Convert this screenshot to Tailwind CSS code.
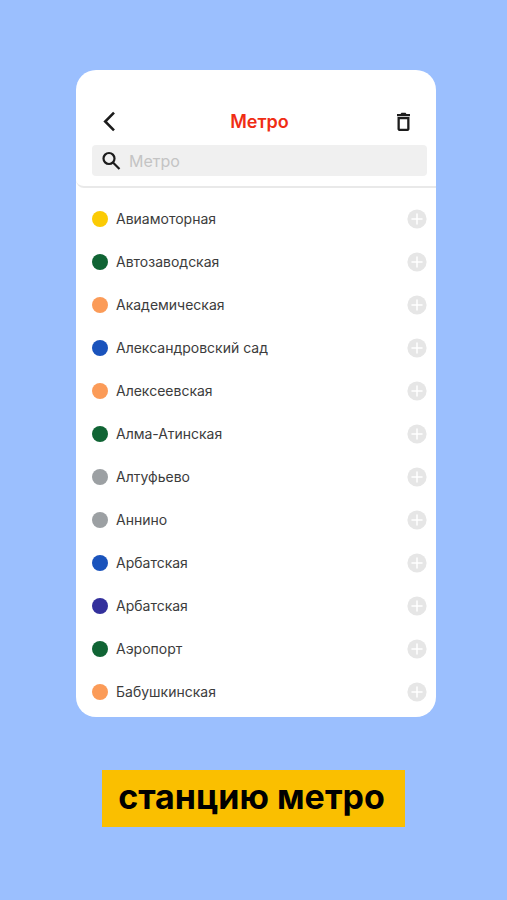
<!DOCTYPE html>
<html lang="ru">
  <head>
    <meta charset="UTF-8" />
    <meta name="viewport" content="width=device-width, initial-scale=1.0">
    <title>Метро</title>
    <script src="https://cdn.jsdelivr.net/npm/@tailwindcss/browser@4"></script>
  </head>
  <body class="bg-[#9bbffe] min-h-screen font-[Inter,Roboto,sans-serif]">
    <!-- icons -->
    <svg class="hidden">
      <symbol id="plus" viewBox="0 0 20 20">
        <circle cx="10" cy="10" r="9.6" fill="#e6e6e6" />
        <path d="M10 5v10M5 10h10" stroke="#fff" stroke-width="1.5" stroke-linecap="round" />
      </symbol>
    </svg>

    <main class="pt-[70px] pb-[72px]">
      <div class="flex justify-center pl-[76px] pr-[71px]">
        <div class="w-full max-w-md bg-white rounded-[20px] overflow-hidden">
          <header class="pl-4 pr-[9px] pt-[38px] pb-[10px] border-b-2 border-[#e9e9e9] rounded-bl-lg">
            <div class="flex items-center justify-between h-7 pl-2 pr-3">
              <button type="button" aria-label="Назад" class="w-7 h-6">
                <svg viewBox="0 0 28 24" class="w-7 h-6" fill="none" stroke="#1c1c1c" stroke-width="2.6">
                  <path d="M14 2.6L5.2 11.5l8.800 8.900" />
                </svg>
              </button>
              <h1 class="text-lg font-semibold text-[#f02d14]">Метро</h1>
              <button type="button" aria-label="Удалить" class="w-6 h-6">
                <svg viewBox="0 0 24 24" class="w-6 h-6" fill="#1c1c1c">
                  <path d="M15.500 4l-1-1.300h-4l-1 1.300H6v2.200h13V4zM6.500 7v12c0 1.100.9 2 2 2h8c1.100 0 2-.9 2-2V7zM8.800 9.200h7.400v9.600H8.800z" fill-rule="evenodd" />
                </svg>
              </button>
            </div>
            <label class="flex items-center gap-2 h-[31px] mt-[9px] px-[9px] bg-[#f0f0f0] rounded">
              <svg viewBox="0 0 20 20" class="w-5 h-5 shrink-0" fill="none" stroke="#1c1c1c" stroke-width="2.2">
                <circle cx="8" cy="7.5" r="5.5" />
                <path d="M12 11.5l6.500 6.500" />
              </svg>
              <input type="text" aria-label="Поиск станции" placeholder="Метро" class="w-full min-w-0 bg-transparent text-base outline-none placeholder:text-[#c4c4c4]" />
            </label>
          </header>

          <ul class="pl-4 pr-[9px] pt-[9px] pb-1 text-sm text-[#3c3c3c]">
            <li class="flex items-center gap-2 h-[43px]">
              <span class="w-4 h-4 rounded-full bg-[#fbcb05]"></span>
              <span class="flex-1">Авиамоторная</span>
              <button type="button" aria-label="Добавить Авиамоторная"><svg class="w-5 h-5"><use href="#plus" /></svg></button>
            </li>
            <li class="flex items-center gap-2 h-[43px]">
              <span class="w-4 h-4 rounded-full bg-[#106434]"></span>
              <span class="flex-1">Автозаводская</span>
              <button type="button" aria-label="Добавить Автозаводская"><svg class="w-5 h-5"><use href="#plus" /></svg></button>
            </li>
            <li class="flex items-center gap-2 h-[43px]">
              <span class="w-4 h-4 rounded-full bg-[#fb9b58]"></span>
              <span class="flex-1">Академическая</span>
              <button type="button" aria-label="Добавить Академическая"><svg class="w-5 h-5"><use href="#plus" /></svg></button>
            </li>
            <li class="flex items-center gap-2 h-[43px]">
              <span class="w-4 h-4 rounded-full bg-[#1a53bc]"></span>
              <span class="flex-1">Александровский сад</span>
              <button type="button" aria-label="Добавить Александровский сад"><svg class="w-5 h-5"><use href="#plus" /></svg></button>
            </li>
            <li class="flex items-center gap-2 h-[43px]">
              <span class="w-4 h-4 rounded-full bg-[#fb9b58]"></span>
              <span class="flex-1">Алексеевская</span>
              <button type="button" aria-label="Добавить Алексеевская"><svg class="w-5 h-5"><use href="#plus" /></svg></button>
            </li>
            <li class="flex items-center gap-2 h-[43px]">
              <span class="w-4 h-4 rounded-full bg-[#106434]"></span>
              <span class="flex-1">Алма-Атинская</span>
              <button type="button" aria-label="Добавить Алма-Атинская"><svg class="w-5 h-5"><use href="#plus" /></svg></button>
            </li>
            <li class="flex items-center gap-2 h-[43px]">
              <span class="w-4 h-4 rounded-full bg-[#9ca0a3]"></span>
              <span class="flex-1">Алтуфьево</span>
              <button type="button" aria-label="Добавить Алтуфьево"><svg class="w-5 h-5"><use href="#plus" /></svg></button>
            </li>
            <li class="flex items-center gap-2 h-[43px]">
              <span class="w-4 h-4 rounded-full bg-[#9ca0a3]"></span>
              <span class="flex-1">Аннино</span>
              <button type="button" aria-label="Добавить Аннино"><svg class="w-5 h-5"><use href="#plus" /></svg></button>
            </li>
            <li class="flex items-center gap-2 h-[43px]">
              <span class="w-4 h-4 rounded-full bg-[#1a53bc]"></span>
              <span class="flex-1">Арбатская</span>
              <button type="button" aria-label="Добавить Арбатская"><svg class="w-5 h-5"><use href="#plus" /></svg></button>
            </li>
            <li class="flex items-center gap-2 h-[43px]">
              <span class="w-4 h-4 rounded-full bg-[#33309c]"></span>
              <span class="flex-1">Арбатская</span>
              <button type="button" aria-label="Добавить Арбатская"><svg class="w-5 h-5"><use href="#plus" /></svg></button>
            </li>
            <li class="flex items-center gap-2 h-[43px]">
              <span class="w-4 h-4 rounded-full bg-[#106434]"></span>
              <span class="flex-1">Аэропорт</span>
              <button type="button" aria-label="Добавить Аэропорт"><svg class="w-5 h-5"><use href="#plus" /></svg></button>
            </li>
            <li class="flex items-center gap-2 h-[43px]">
              <span class="w-4 h-4 rounded-full bg-[#fb9b58]"></span>
              <span class="flex-1">Бабушкинская</span>
              <button type="button" aria-label="Добавить Бабушкинская"><svg class="w-5 h-5"><use href="#plus" /></svg></button>
            </li>
          </ul>
        </div>
      </div>

      <p class="w-fit mx-auto mt-[53px] pl-4 pr-5 pt-1 pb-2 bg-[#fabf00] text-black text-[34px] leading-[45px] font-bold">станцию метро</p>
    </main>
  </body>
</html>
